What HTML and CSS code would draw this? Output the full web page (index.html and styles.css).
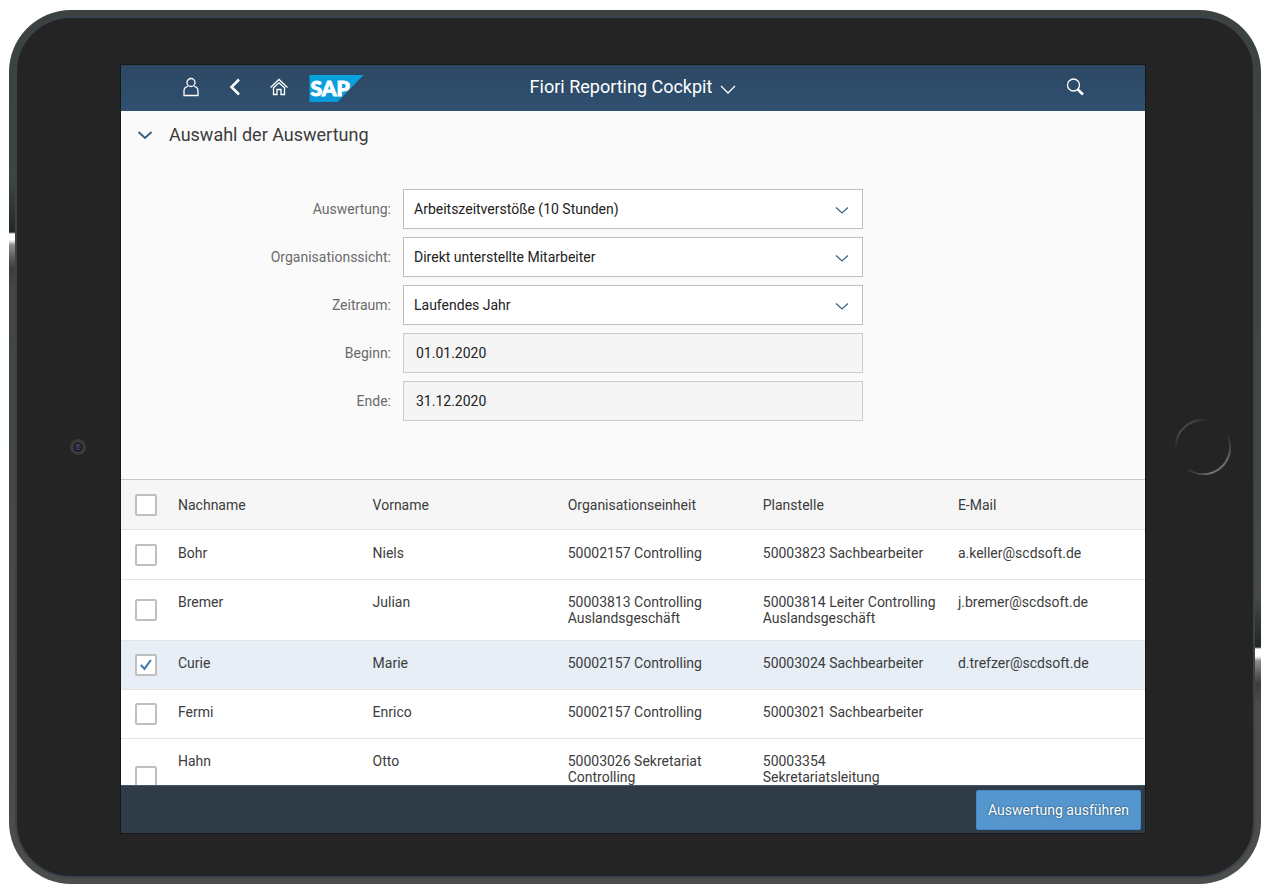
FILE: index.html
```html
<!DOCTYPE html>
<html lang="de">
<head>
<meta charset="utf-8">
<meta name="viewport" content="width=device-width, initial-scale=1">
<title>Fiori Reporting Cockpit</title>
<link rel="stylesheet" href="styles.css">
</head>
<body>
<div class="tablet">
  <div class="bezel">
    <svg class="camera" viewBox="0 0 16 16" aria-hidden="true">
      <circle cx="8" cy="8" r="8" fill="#3b3a3b"/>
      <circle cx="8" cy="8" r="4.5" fill="#171518"/>
      <circle cx="8" cy="8" r="3.2" fill="#322a52"/>
      <circle cx="8" cy="8" r="1.6" fill="#1b1726"/>
      <path d="M6.5 6h3M7 10.5h2" stroke="#5b5480" stroke-width="1"/>
      <circle cx="8" cy="8" r="0.8" fill="#77727f"/>
    </svg>

    <div class="screen">
      <header class="shell">
        <nav class="shell-nav">
          <button class="shell-btn" type="button" aria-label="Benutzer">
            <svg class="icon" viewBox="0 0 20 20"><circle cx="10" cy="5.500" r="4"/><path d="M6.800 9.300C4.500 9.800 3 11.500 3 14V18.500H17V14C17 11.500 15.500 9.800 13.200 9.300"/></svg>
          </button>
          <button class="shell-btn" type="button" aria-label="Zurück">
            <svg class="icon icon-back" viewBox="0 0 20 20"><path d="M14 2.500L6.500 10L14 17.500"/></svg>
          </button>
          <button class="shell-btn" type="button" aria-label="Startseite">
            <svg class="icon" viewBox="0 0 20 20"><path d="M1.500 10.500L10 2.500L18.500 10.500M4 11.300L10 5.800L16 11.300M4.500 11V17.500H8V12.500H12V17.500H15.500V11"/></svg>
          </button>
          <a class="logo" href="#" aria-label="SAP">
            <svg class="logo-svg" viewBox="0 0 54 27">
              <defs><linearGradient id="sap" x1="0" y1="0" x2="0" y2="1"><stop offset="0" stop-color="#06a4df"/><stop offset="1" stop-color="#0a98da"/></linearGradient></defs>
              <path d="M0 0H54L28 27H0Z" fill="url(#sap)"/>
              <text class="logo-text" x="1" y="21">SAP</text>
            </svg>
          </a>
        </nav>
        <button class="shell-title" type="button">
          <span>Fiori Reporting Cockpit</span>
          <svg class="title-arrow" viewBox="0 0 16 16"><path d="M1 7L8 14L15 7"/></svg>
        </button>
        <div class="shell-end">
          <button class="shell-btn" type="button" aria-label="Suchen">
            <svg class="icon" viewBox="0 0 20 20"><circle cx="8.500" cy="8" r="6"/><path class="handle" d="M12.800 12.500L18 17.500"/></svg>
          </button>
        </div>
      </header>

      <main class="content">
        <section class="panel">
          <div class="panel-head">
            <button class="panel-toggle" type="button" aria-label="Auswahl einklappen">
              <svg class="toggle-arrow" viewBox="0 0 16 16"><path d="M1.500 5L8 11L14.500 5"/></svg>
            </button>
            <h1 class="panel-title">Auswahl der Auswertung</h1>
          </div>
          <form class="form">
            <label class="label" for="auswertung">Auswertung:</label>
            <div class="select">
              <select id="auswertung" class="field"><option>Arbeitszeitverstöße (10 Stunden)</option></select>
              <svg class="select-arrow" viewBox="0 0 14 14"><path d="M1 5.500L7 11L13 5.500"/></svg>
            </div>
            <label class="label" for="sicht">Organisationssicht:</label>
            <div class="select">
              <select id="sicht" class="field"><option>Direkt unterstellte Mitarbeiter</option></select>
              <svg class="select-arrow" viewBox="0 0 14 14"><path d="M1 5.500L7 11L13 5.500"/></svg>
            </div>
            <label class="label" for="zeitraum">Zeitraum:</label>
            <div class="select">
              <select id="zeitraum" class="field"><option>Laufendes Jahr</option></select>
              <svg class="select-arrow" viewBox="0 0 14 14"><path d="M1 5.500L7 11L13 5.500"/></svg>
            </div>
            <label class="label" for="beginn">Beginn:</label>
            <input id="beginn" class="field field-readonly" type="text" value="01.01.2020" readonly>
            <label class="label" for="ende">Ende:</label>
            <input id="ende" class="field field-readonly" type="text" value="31.12.2020" readonly>
          </form>
        </section>

        <table class="table">
          <colgroup><col class="col-check"><col class="col-name"><col><col><col><col></colgroup>
          <thead>
            <tr>
              <th class="check"><input class="box" type="checkbox" aria-label="Alle auswählen"></th>
              <th>Nachname</th><th>Vorname</th><th>Organisationseinheit</th><th>Planstelle</th><th>E-Mail</th>
            </tr>
          </thead>
          <tbody>
            <tr>
              <td class="check"><input class="box" type="checkbox" aria-label="Bohr auswählen"></td>
              <td>Bohr</td><td>Niels</td><td>50002157 Controlling</td><td>50003823 Sachbearbeiter</td><td>a.keller@scdsoft.de</td>
            </tr>
            <tr>
              <td class="check"><input class="box" type="checkbox" aria-label="Bremer auswählen"></td>
              <td>Bremer</td><td>Julian</td><td>50003813 Controlling Auslandsgeschäft</td><td>50003814 Leiter Controlling Auslandsgeschäft</td><td>j.bremer@scdsoft.de</td>
            </tr>
            <tr class="selected">
              <td class="check"><input class="box" type="checkbox" aria-label="Curie auswählen" checked></td>
              <td>Curie</td><td>Marie</td><td>50002157 Controlling</td><td>50003024 Sachbearbeiter</td><td>d.trefzer@scdsoft.de</td>
            </tr>
            <tr>
              <td class="check"><input class="box" type="checkbox" aria-label="Fermi auswählen"></td>
              <td>Fermi</td><td>Enrico</td><td>50002157 Controlling</td><td>50003021 Sachbearbeiter</td><td></td>
            </tr>
            <tr class="tall">
              <td class="check"><input class="box" type="checkbox" aria-label="Hahn auswählen"></td>
              <td>Hahn</td><td>Otto</td><td>50003026 Sekretariat Controlling</td><td>50003354 Sekretariatsleitung</td><td></td>
            </tr>
          </tbody>
        </table>
      </main>

      <footer class="footer">
        <button class="run" type="button">Auswertung ausführen</button>
      </footer>
    </div>

    <svg class="home" viewBox="0 0 56 56" aria-hidden="true">
      <defs>
        <linearGradient id="ring-a" gradientUnits="userSpaceOnUse" x1="2" y1="32" x2="34" y2="0"><stop offset="0" stop-color="#242424"/><stop offset="0.300" stop-color="#484848"/><stop offset="0.700" stop-color="#444"/><stop offset="1" stop-color="#242424"/></linearGradient>
        <linearGradient id="ring-b" gradientUnits="userSpaceOnUse" x1="14" y1="56" x2="56" y2="16"><stop offset="0" stop-color="#242424"/><stop offset="0.300" stop-color="#777"/><stop offset="0.700" stop-color="#666"/><stop offset="1" stop-color="#242424"/></linearGradient>
      </defs>
      <path d="M1 31A27 27 0 0 1 34 1.700" fill="none" stroke="url(#ring-a)" stroke-width="2"/>
      <path d="M53 17.500A27 27 0 0 1 13 50.500" fill="none" stroke="url(#ring-b)" stroke-width="2"/>
    </svg>
  </div>
</div>
</body>
</html>
```
FILE: styles.css
```css
* { box-sizing: border-box; }

body {
  margin: 0;
  padding: 10px 11px 9px 9px;
  height: 100vh;
  background: #fff;
  color: #3c3c3c;
  font: 14px/16px Roboto, "Liberation Sans", sans-serif;
}

button, input, select { font: inherit; margin: 0; }
button { padding: 0; border: 0; background: none; cursor: pointer; }

/* Device frame */
.tablet {
  height: 100%;
  padding: 6px;
  border-radius: 62px;
  background:
    linear-gradient(transparent 0, #2a2f2c 40px, #222624 52px, #fff 54px, #fff 60px, #8c8c8c 65px, #5a5c5b 78px, #3a3d3c 88px, #454846 110px, transparent 160px) 0 170px / 6px 160px no-repeat,
    linear-gradient(transparent 0, #2a2f2c 40px, #222624 51px, #fff 53px, #fff 60px, #8c8c8c 65px, #5a5c5b 78px, #3a3d3c 88px, #4d4e4b 110px, transparent 160px) 100% 586px / 6px 160px no-repeat,
    linear-gradient(#3c423e, #4c4e4b);
}

.bezel {
  display: grid;
  grid-template-columns: 104px minmax(0, 1fr) 108px;
  grid-template-rows: minmax(0, 1fr);
  align-items: center;
  height: 100%;
  border: 2px solid #3c424d;
  border-radius: 56px;
  background: #242424;
}

.camera { width: 16px; justify-self: end; margin-right: 35px; }
.home { width: 56px; margin-left: 30px; }

.screen {
  display: flex;
  flex-direction: column;
  align-self: stretch;
  min-height: 0;
  margin: 47px 0 43px;
  background: #fff;
  box-shadow: 0 0 0 1px #181818;
}

/* Shell bar */
.shell {
  display: grid;
  grid-template-columns: 1fr auto 1fr;
  align-items: center;
  flex: none;
  height: 46px;
  padding: 0 48px 2px;
  background: linear-gradient(#2c4864, #305070);
  color: #fff;
}

.shell-nav { display: flex; align-items: center; }
.shell-end { display: flex; justify-content: flex-end; }
.shell-btn { display: flex; align-items: center; justify-content: center; width: 44px; height: 44px; }
.icon { width: 20px; height: 20px; fill: none; stroke: #fff; stroke-width: 1.300; }
.icon-back { stroke-width: 2.500; }
.handle { stroke-width: 2.500; }
.logo { display: block; margin: 2px 0 0 8px; }
.logo-svg { display: block; width: 55px; height: 27px; }
.logo-text { font: 900 21px Lato, sans-serif; fill: #fff; stroke: #fff; stroke-width: 1; }

.shell-title { display: flex; align-items: center; gap: 8px; color: #fff; font-size: 18px; line-height: 24px; }
.title-arrow { width: 16px; height: 16px; fill: none; stroke: #fff; stroke-width: 1.300; }

/* Content */
.content { flex: 1; min-height: 0; overflow: hidden; }

.panel { padding-bottom: 58px; background: #fafafa; border-bottom: 1px solid #c8c8c8; }
.panel-head { display: flex; align-items: center; height: 48px; }
.panel-toggle { display: flex; align-items: center; justify-content: center; width: 48px; height: 48px; }
.toggle-arrow { width: 16px; height: 16px; fill: none; stroke: #346187; stroke-width: 2; }
.panel-title { margin: 0; font-size: 18px; line-height: 24px; font-weight: 400; }

.form {
  display: grid;
  grid-template-columns: 270fr 460fr 270fr;
  gap: 8px 12px;
  align-items: center;
  padding-top: 30px;
}

.label { grid-column: 1; text-align: right; color: #6a6a6a; }

.select { display: grid; grid-template-columns: minmax(0, 1fr) 28px; align-items: center; }
.select .field { grid-area: 1 / 1 / 2 / 3; }
.select-arrow { grid-area: 1 / 2; width: 14px; height: 14px; fill: none; stroke: #346187; stroke-width: 1.200; pointer-events: none; }

.field {
  width: 100%;
  height: 40px;
  padding: 0 10px;
  border: 1px solid #bfbfbf;
  border-radius: 0;
  background: #fff;
  color: #222;
  appearance: none;
}
.field-readonly { padding: 0 12px; border-color: #ccc; background: #f5f5f5; }

/* Table */
.table { width: 100%; table-layout: fixed; border-collapse: separate; border-spacing: 0; }
.col-check { width: 49px; }
.col-name { width: 19%; }
.table th, .table td {
  height: 49px;
  padding: 14px 8px;
  border-bottom: 1px solid #e4e4e4;
  vertical-align: top;
  text-align: left;
  font-weight: 400;
}
.table th { height: 50px; padding: 0 8px; background: #f6f6f6; vertical-align: middle; }
.table tbody tr:first-child td { height: 50px; padding-top: 15px; }
.table .tall td { height: 77px; }
.table th.check, .table td.check, .table tbody tr:first-child td.check { padding: 0 0 0 14px; vertical-align: middle; }
.selected { background: #e7eef6; }

.box {
  display: grid;
  place-content: center;
  width: 22px;
  height: 22px;
  border: 2px solid #bfbfbf;
  border-radius: 2px;
  background: #fff;
  appearance: none;
}
.box:checked::before {
  content: "";
  width: 12px;
  height: 12px;
  background: #3b79b0;
  clip-path: polygon(0 55%, 14% 43%, 36% 68%, 84% 4%, 98% 12%, 38% 96%);
}

/* Footer */
.footer {
  display: flex;
  align-items: center;
  justify-content: flex-end;
  flex: none;
  height: 48px;
  padding: 1px 4px 0 0;
  border-top: 1px solid #43576a;
  background: #2f3c48;
}
.run {
  height: 40px;
  padding: 0 11px;
  border: 1px solid #4389c9;
  border-radius: 2px;
  background: #5496cd;
  color: #fff;
  text-shadow: 0 0 2px #1c3c58;
}
```
